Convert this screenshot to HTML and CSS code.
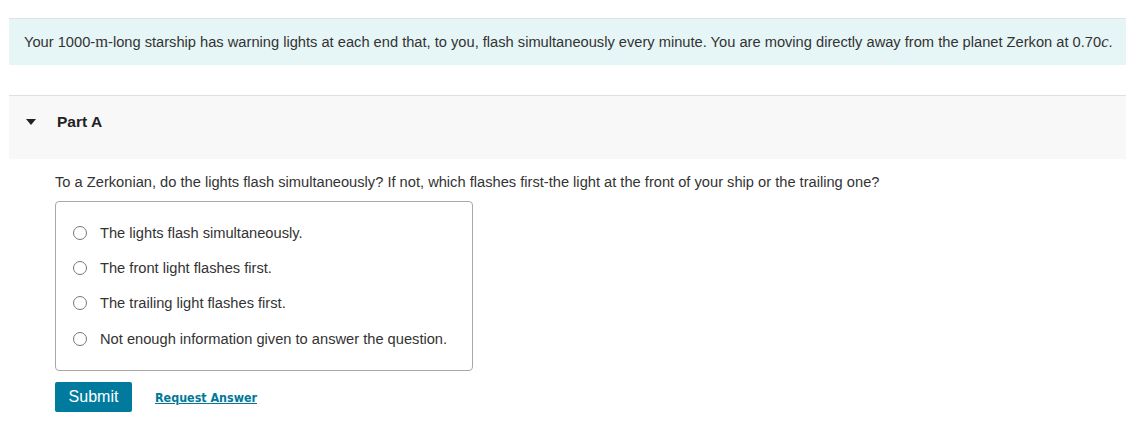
FILE: index.html
```html
<!DOCTYPE html>
<html>
<head>
<meta charset="utf-8">
<link rel="stylesheet" href="styles.css">
</head>
<body>
<div class="page">
  <div class="problem">
    <p class="problem-text">Your 1000-<span class="math">m</span>-long starship has warning lights at each end that, to you, flash simultaneously every minute. You are moving directly away from the planet Zerkon at 0.70<span class="math italic">c</span>.</p>
  </div>
  <div class="part-header">
    <span class="caret"></span>
    <span class="part-title">Part A</span>
  </div>
  <div class="part-body">
    <p class="question">To a Zerkonian, do the lights flash simultaneously? If not, which flashes first-the light at the front of your ship or the trailing one?</p>
    <div class="options">
      <label class="option"><span class="radio"></span><span>The lights flash simultaneously.</span></label>
      <label class="option"><span class="radio"></span><span>The front light flashes first.</span></label>
      <label class="option"><span class="radio"></span><span>The trailing light flashes first.</span></label>
      <label class="option"><span class="radio"></span><span>Not enough information given to answer the question.</span></label>
    </div>
    <div class="actions">
      <button class="submit">Submit</button>
      <a class="request" href="#">Request Answer</a>
    </div>
  </div>
</div>
</body>
</html>
```

FILE: styles.css
```css
html, body {
  margin: 0;
  padding: 0;
  background: #fff;
}
body {
  font-family: "Liberation Sans", Arial, sans-serif;
  color: #333;
  font-size: 14.667px;
}
.page {
  padding-left: 9px;
  padding-top: 18px;
}
.problem {
  border-top: 1px solid #dde4e4;
  background: #e6f6f6;
  height: 46px;
  display: flex;
  align-items: center;
  padding-left: 15px;
}
.problem-text {
  margin: 0;
  line-height: 20px;
}
.math {
  font-family: "Liberation Serif", "DejaVu Serif", serif;
  font-size: 16.5px;
}
.italic {
  font-style: italic;
}
.part-header {
  margin-top: 30px;
  border-top: 1px solid #e0e0e0;
  background: #f8f8f8;
  height: 64px;
  box-sizing: border-box;
  padding-bottom: 11px;
  display: flex;
  align-items: center;
}
.caret {
  width: 0;
  height: 0;
  border-left: 5px solid transparent;
  border-right: 5px solid transparent;
  border-top: 6px solid #222;
  margin-left: 17px;
  margin-right: 21px;
}
.part-title {
  font-weight: bold;
  font-size: 15.5px;
  color: #222;
}
.part-body {
  padding-left: 46px;
}
.question {
  margin: 13px 0 0 0;
  line-height: 20px;
}
.options {
  margin-top: 9px;
  width: 416px;
  border: 1px solid #a8a8a8;
  border-radius: 4px;
  padding: 13px 0 14px 0;
  display: flex;
  flex-direction: column;
}
.option {
  display: flex;
  align-items: center;
  height: 35.3px;
  padding-left: 17px;
}
.radio {
  width: 12px;
  height: 12px;
  border: 1px solid #777;
  border-radius: 50%;
  margin-right: 13px;
  box-sizing: content-box;
}
.actions {
  margin-top: 11px;
  display: flex;
  align-items: center;
}
.submit {
  width: 77px;
  height: 30px;
  border: none;
  border-radius: 2px;
  background: #007b9d;
  color: #fff;
  font-family: "Liberation Sans", Arial, sans-serif;
  font-size: 16px;
  padding: 0;
}
.request {
  margin-left: 23px;
  color: #00789a;
  font-family: "DejaVu Sans Condensed", "DejaVu Sans", Tahoma, sans-serif;
  font-weight: bold;
  font-size: 12.4px;
  text-decoration: underline;
}
```
